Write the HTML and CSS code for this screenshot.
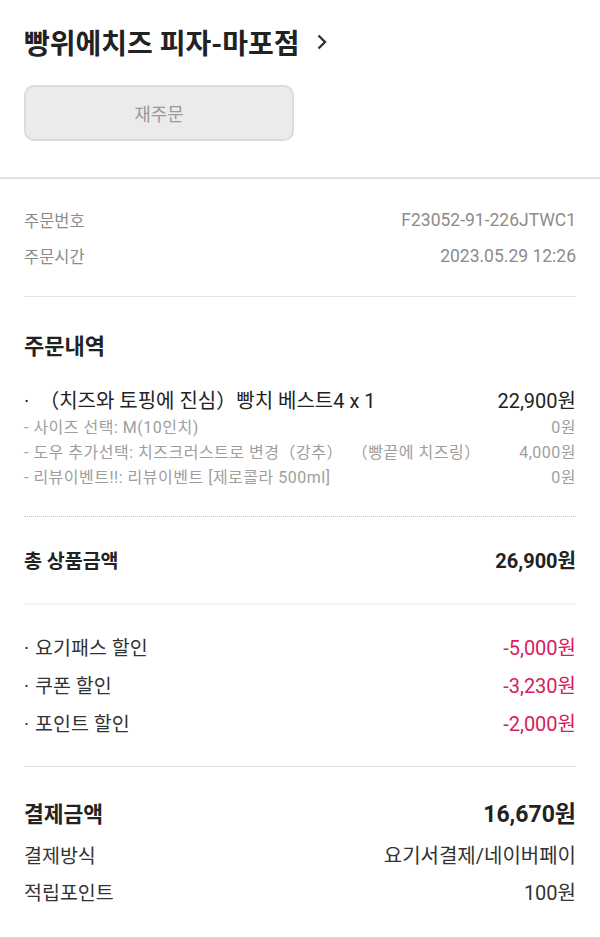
FILE: index.html
```html
<!DOCTYPE html>
<html lang="ko">

<head>
    <meta charset="UTF-8">
    <meta name="viewport" content="width=device-width, initial-scale=1.0">
    <title>주문상세</title>
    <link rel="stylesheet" href="styles.css">
</head>

<body>
    <div class="store">
        <h1 class="store-name">
            <span>빵위에치즈 피자-마포점</span>
            <svg class="chevron" width="12" height="16" viewBox="0 0 12 16">
                <path d="M2.5 1.5 L9 8 L2.5 14.5" fill="none" stroke="#333" stroke-width="2.4" />
            </svg>
        </h1>
        <div class="reorder">재주문</div>
    </div>

    <div class="section order-info">
        <div class="info-row">
            <span>주문번호</span>
            <span class="value">F23052-91-226JTWC1</span>
        </div>
        <div class="info-row">
            <span>주문시간</span>
            <span class="value">2023.05.29 12:26</span>
        </div>
    </div>

    <div class="section order-items">
        <h2 class="section-title">주문내역</h2>
        <div class="item-row">
            <span>·&nbsp;&nbsp;（치즈와 토핑에 진심）빵치 베스트4 x 1</span>
            <span class="value">22,900원</span>
        </div>
        <div class="option-row">
            <span>- 사이즈 선택: M(10인치)</span>
            <span>0원</span>
        </div>
        <div class="option-row">
            <span>- 도우 추가선택: 치즈크러스트로 변경（강추）&nbsp; （빵끝에 치즈링）</span>
            <span>4,000원</span>
        </div>
        <div class="option-row">
            <span>- 리뷰이벤트!!: 리뷰이벤트 [제로콜라 500ml]</span>
            <span>0원</span>
        </div>
    </div>

    <div class="total-row">
        <span>총 상품금액</span>
        <span class="value">26,900원</span>
    </div>

    <div class="section discounts">
        <div class="discount-row">
            <span><span class="dot">·</span>요기패스 할인</span>
            <span class="value minus">-5,000원</span>
        </div>
        <div class="discount-row">
            <span><span class="dot">·</span>쿠폰 할인</span>
            <span class="value minus">-3,230원</span>
        </div>
        <div class="discount-row">
            <span><span class="dot">·</span>포인트 할인</span>
            <span class="value minus">-2,000원</span>
        </div>
    </div>

    <div class="payment">
        <div class="pay-total">
            <span>결제금액</span>
            <span class="value">16,670원</span>
        </div>
        <div class="pay-row">
            <span>결제방식</span>
            <span class="value">요기서결제/네이버페이</span>
        </div>
        <div class="pay-row">
            <span>적립포인트</span>
            <span class="value">100원</span>
        </div>
    </div>
</body>

</html>
```

FILE: styles.css
```css
/* 기본 */
body {
    font-family: Roboto, 'Noto Sans CJK KR', sans-serif;
    margin: 0;
    background-color: #ffffff;
    color: #222222;
}

/* 가게 정보 */
.store {
    padding: 22px 24px 36px;
    border-bottom: 2px solid #e0e0e0;
}

.store-name {
    display: flex;
    align-items: center;
    gap: 16px;
    height: 40px;
    margin: 0 0 23px;
    font-size: 28px;
    font-weight: bold;
    color: #222222;
}

.reorder {
    box-sizing: border-box;
    width: 270px;
    height: 56px;
    display: flex;
    align-items: center;
    justify-content: center;
    background-color: #ebebeb;
    border: 2px solid #dcdcdc;
    border-radius: 10px;
    font-size: 18px;
    color: #9a9a9a;
}

/* 공통 섹션 */
.section {
    margin: 0 24px;
    border-bottom: 1px solid #e3e3e3;
}

/* 주문번호, 주문시간 */
.order-info {
    padding: 23px 0 22px;
}

.info-row {
    display: flex;
    justify-content: space-between;
    align-items: center;
    height: 36px;
    font-size: 16.5px;
    color: #8c8c8c;
}

.info-row .value {
    font-size: 17.5px;
}

/* 주문내역 */
.order-items {
    padding: 35px 0 28px;
    border-bottom: 1px dotted #c4c4c4;
}

.section-title {
    margin: 0 0 24px;
    font-size: 22px;
    font-weight: bold;
    line-height: 30px;
}

.item-row {
    display: flex;
    justify-content: space-between;
    align-items: center;
    height: 26px;
    margin-bottom: 1px;
    font-size: 20px;
    color: #222222;
}

.option-row {
    display: flex;
    justify-content: space-between;
    align-items: center;
    height: 25px;
    font-size: 16px;
    letter-spacing: 0.5px;
    color: #9e9e9e;
}

/* 총 상품금액 */
.total-row {
    display: flex;
    justify-content: space-between;
    align-items: center;
    height: 28px;
    margin: 0 24px;
    padding: 28px 0 30px;
    font-size: 19.5px;
    font-weight: bold;
    border-bottom: 2px solid #f2f2f2;
}

.total-row .value {
    font-size: 20px;
}

/* 할인 */
.discounts {
    padding: 22px 0 25px;
}

.discount-row {
    display: flex;
    justify-content: space-between;
    align-items: center;
    height: 38px;
    font-size: 19.5px;
    color: #333333;
}

.discount-row .dot {
    margin-right: 6px;
}

.discount-row .value {
    font-size: 20px;
}

.minus {
    color: #d81b5a;
}

/* 결제 */
.payment {
    margin: 0 24px;
    padding: 25px 0;
}

.pay-total {
    display: flex;
    justify-content: space-between;
    align-items: center;
    height: 40px;
    margin-bottom: 4px;
    font-size: 21.5px;
    font-weight: bold;
}

.pay-total .value {
    font-size: 23px;
}

.pay-row {
    display: flex;
    justify-content: space-between;
    align-items: center;
    height: 37px;
    font-size: 19.5px;
    color: #333333;
}

.pay-row .value {
    font-size: 20px;
}
```
